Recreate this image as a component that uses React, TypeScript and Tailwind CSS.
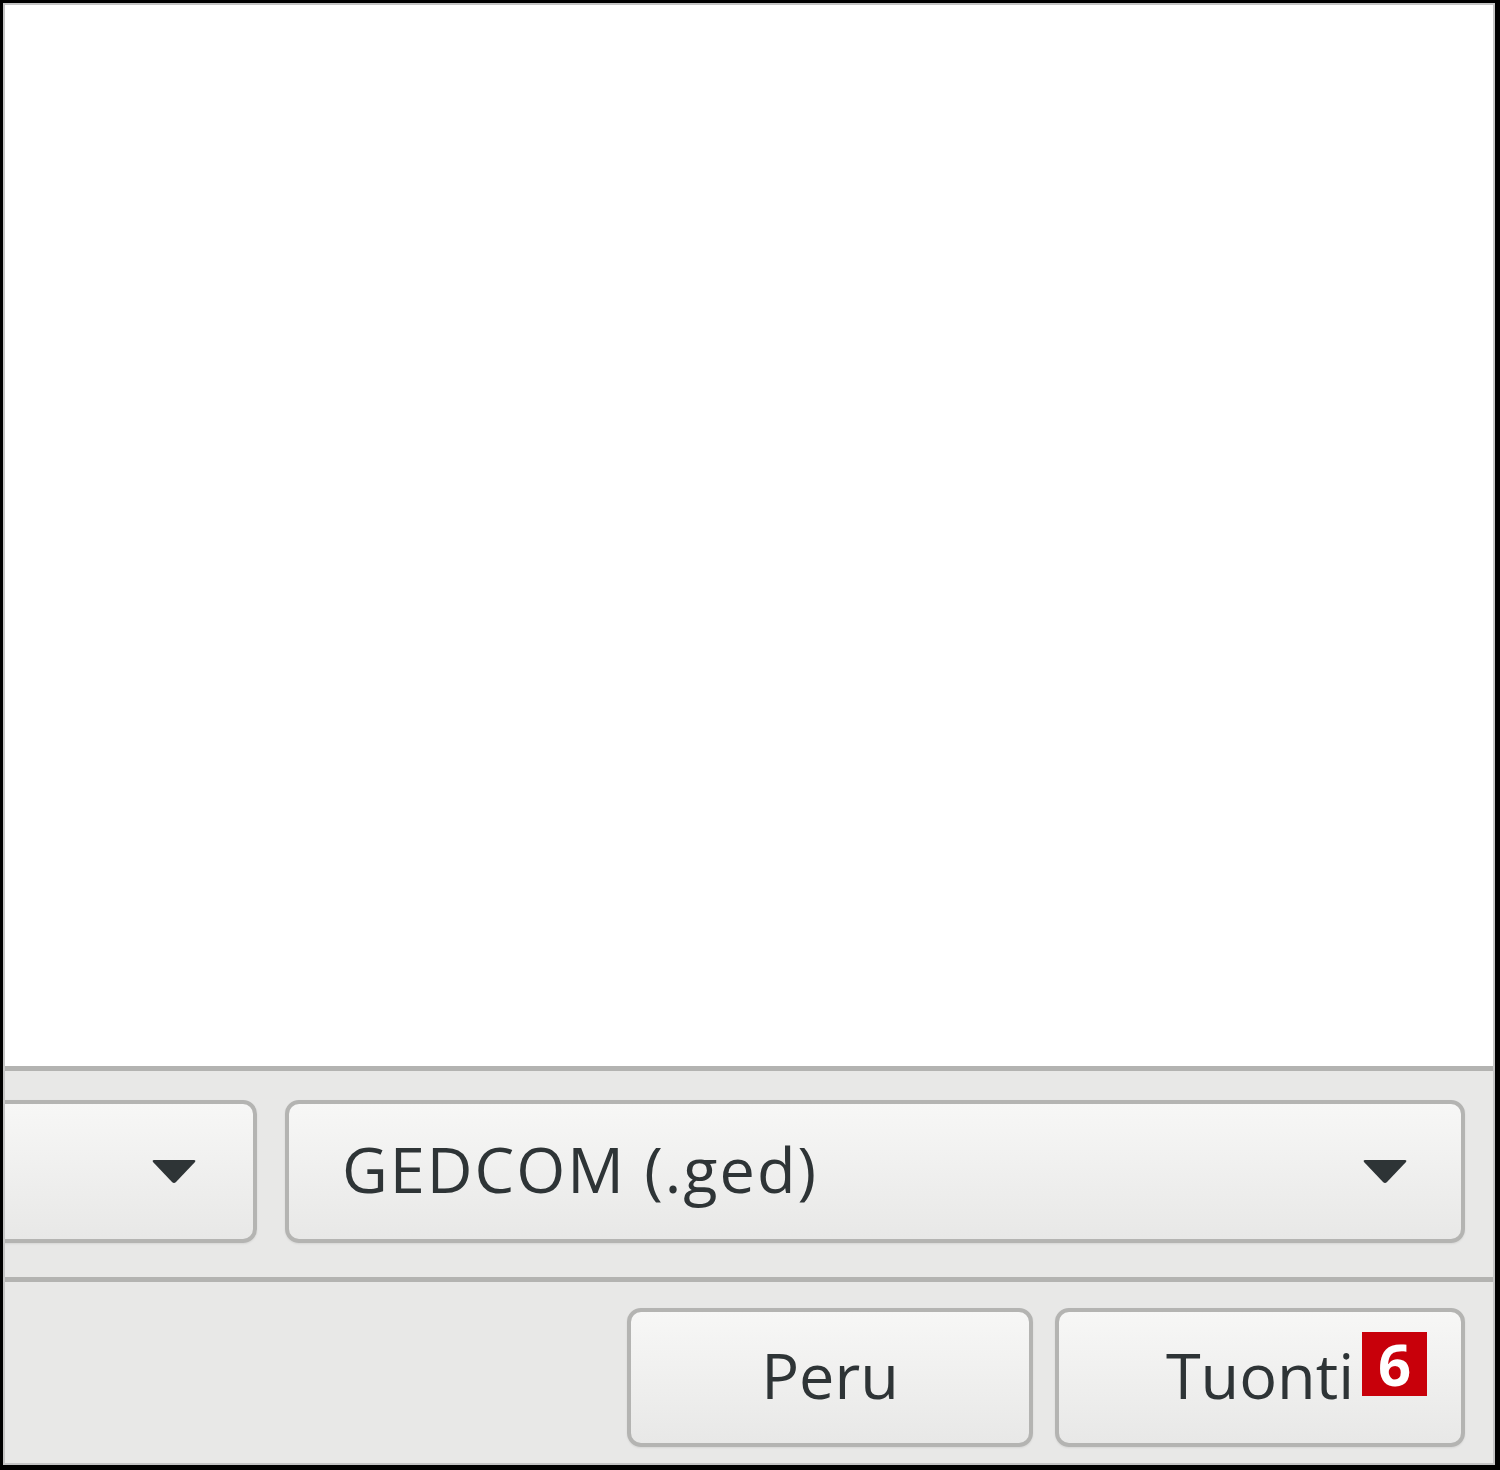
import React from "react";

function Arrow() {
  return (
    <svg width="46" height="27" viewBox="0 0 46 27" className="shrink-0">
      <path d="M3 2 H43 Q45 2 44 4 L25 24 Q23 26 21 24 L2 4 Q1 2 3 2 Z" fill="#2e3436" />
    </svg>
  );
}

const btn =
  "border-[4px] border-[#b4b4b2] rounded-[14px] bg-gradient-to-b from-[#f7f7f6] to-[#e8e8e7] shadow-[0_1px_2px_rgba(0,0,0,0.08)]";

export default function App() {
  return (
    <div
      className="w-[1500px] h-[1470px] bg-black pl-[3px] pt-[3px] pr-[5px] pb-[5px]"
      style={{ fontFamily: '"Open Sans", "Noto Sans", sans-serif' }}
    >
      <div className="w-full h-full flex flex-col border-[2px] border-[#c4c4c4] bg-[#e8e8e7]">
        <div className="h-[1061px] bg-white shrink-0" />
        <div className="h-[5px] bg-[#b3b3b1] shrink-0" />
        <div className="h-[206px] shrink-0 flex gap-[28px] pt-[29px] pr-[28px] overflow-hidden">
          <div className={`${btn} h-[143px] w-[292px] ml-[-40px] shrink-0 flex items-center justify-end pr-[56px]`}>
            <Arrow />
          </div>
          <div className={`${btn} h-[143px] flex-1 flex items-center justify-between pl-[53px] pr-[53px]`}>
            <span className="text-[63px] leading-none text-[#2e3436] tracking-[2px] mb-[6px]">GEDCOM (.ged)</span>
            <Arrow />
          </div>
        </div>
        <div className="h-[5px] bg-[#b3b3b1] shrink-0" />
        <div className="flex-1 flex justify-end gap-[22px] pt-[26px] pr-[28px]">
          <div className={`${btn} h-[139px] w-[406px] flex items-center justify-center`}>
            <span className="text-[63px] leading-none text-[#2e3436] mb-[7px]">Peru</span>
          </div>
          <div className={`${btn} h-[139px] w-[410px] flex items-center justify-center relative`}>
            <span className="text-[63px] leading-none text-[#2e3436] mb-[7px]">Tuonti</span>
            <div className="absolute left-[303px] top-[20px] w-[65px] h-[64px] bg-[#c8000a] flex items-center justify-center">
              <span className="text-[58px] leading-none font-bold text-white">6</span>
            </div>
          </div>
        </div>
      </div>
    </div>
  );
}
